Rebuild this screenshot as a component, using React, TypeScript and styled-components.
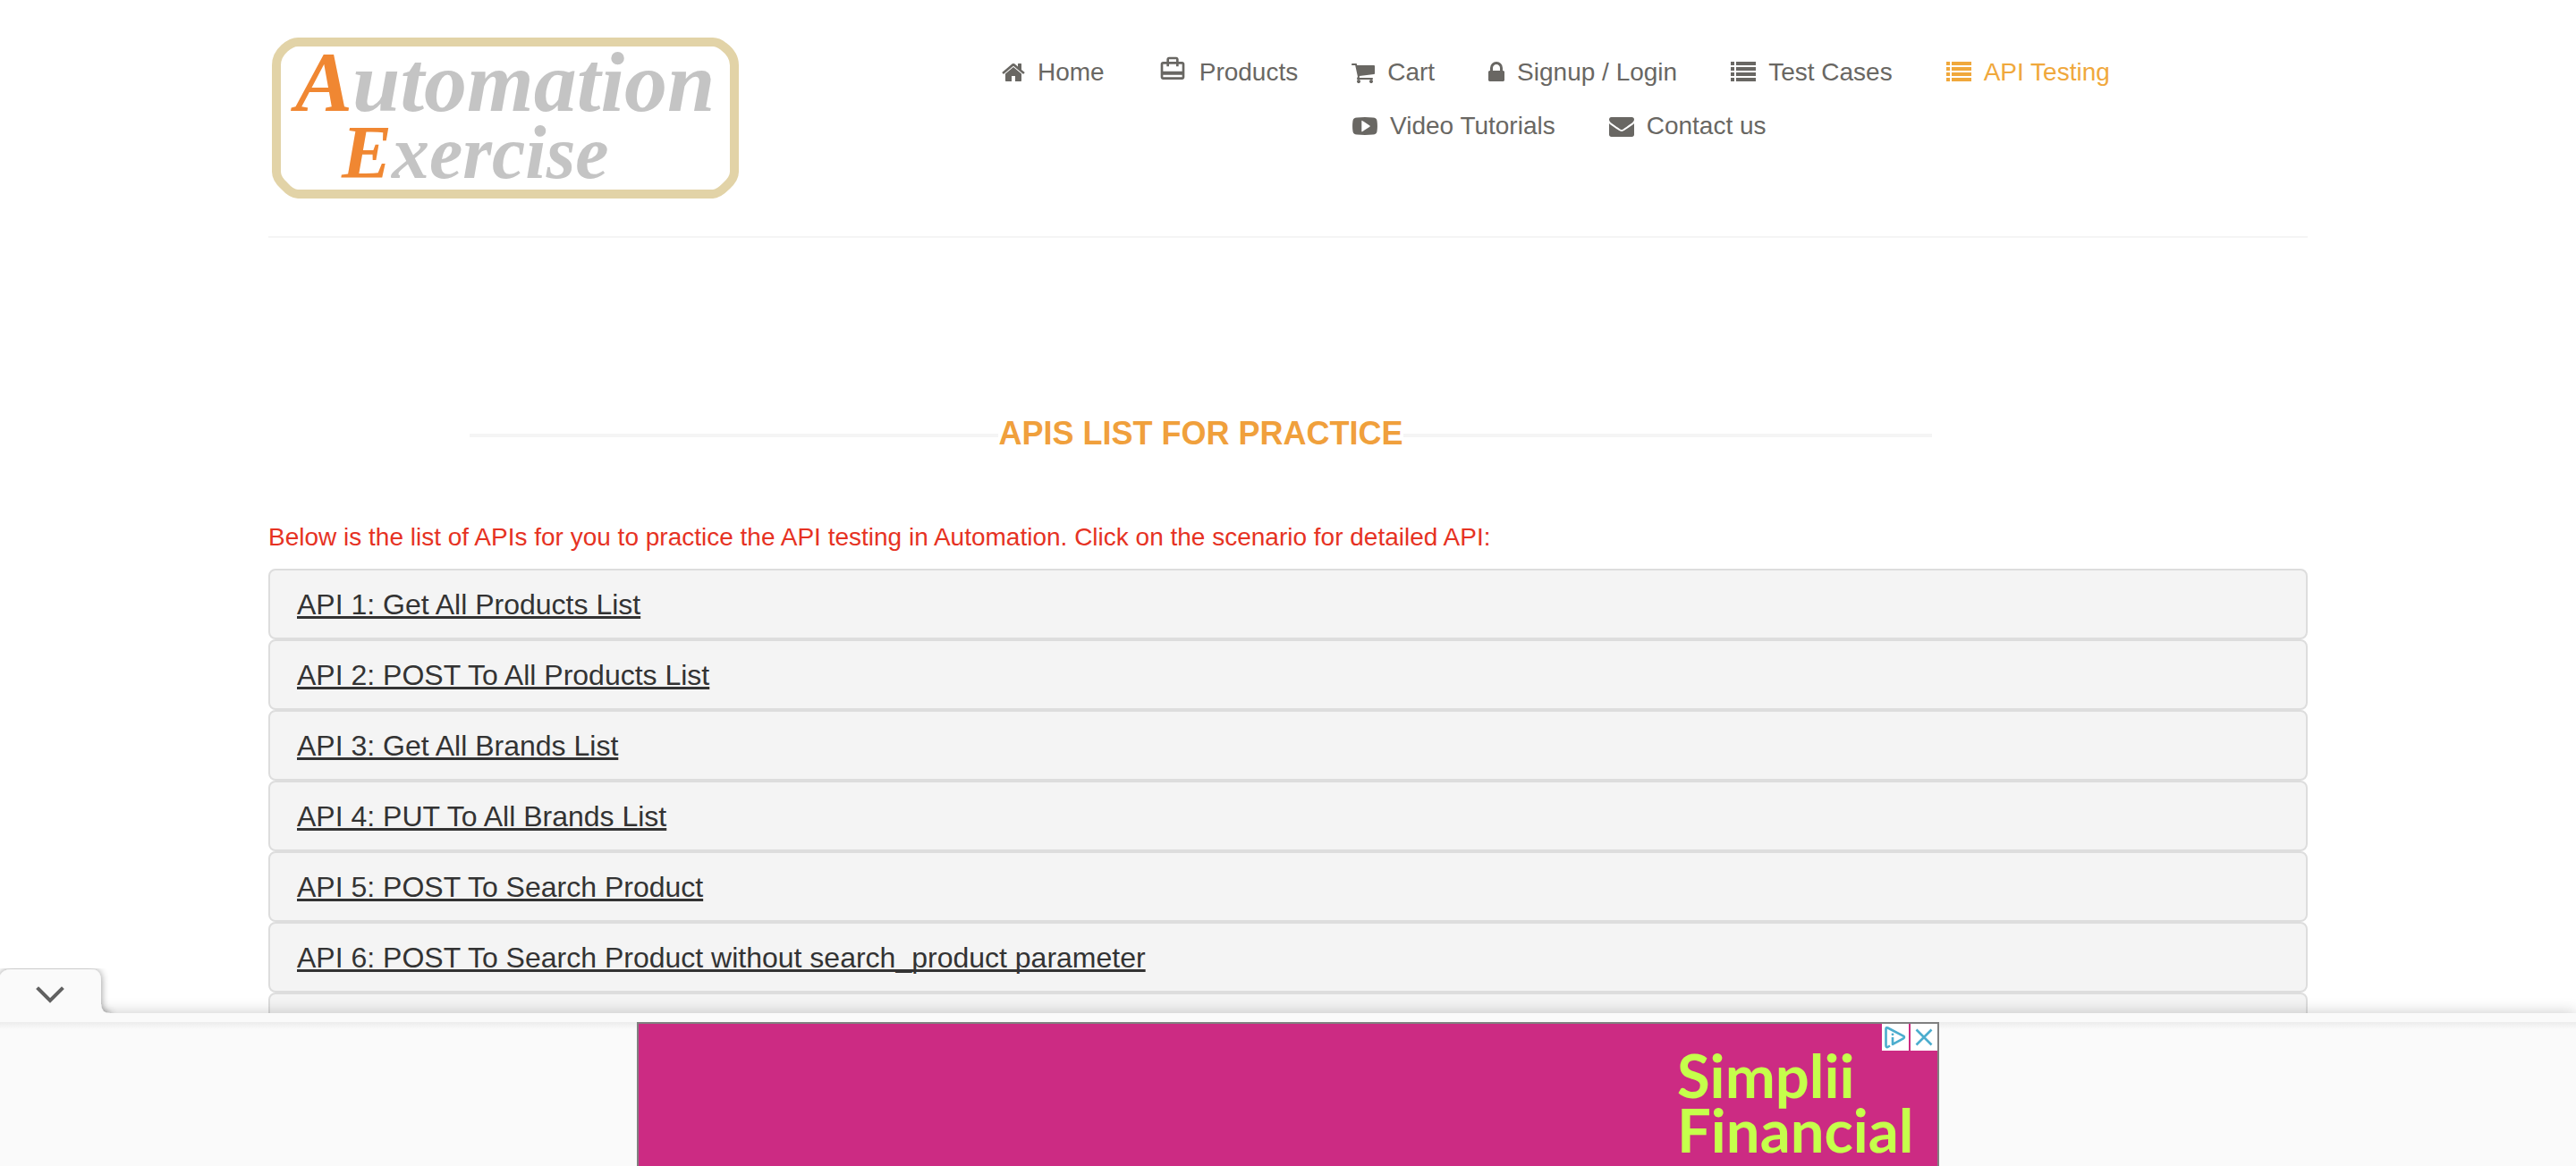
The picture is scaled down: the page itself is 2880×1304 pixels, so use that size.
import React from "react";
import styled, { createGlobalStyle } from "styled-components";

const GlobalStyle = createGlobalStyle`
  * { box-sizing: border-box; }
  body {
    margin: 0;
    background: #fff;
    font-family: "Liberation Sans", Arial, Helvetica, sans-serif;
    font-size: 28px;
    color: #696763;
  }
`;

const Page = styled.div`
  display: flex;
  flex-direction: column;
  height: 100vh;
  overflow: hidden;
`;

const Content = styled.div`
  flex: 1;
  min-height: 0;
  overflow: hidden;
`;

const Container = styled.div`
  max-width: 2280px;
  margin: 0 auto;
`;

const Header = styled.header`
  display: grid;
  grid-template-columns: 1fr 2fr;
  padding-bottom: 42px;
  border-bottom: 2px solid #f5f5f5;
`;

const LogoLink = styled.a`
  display: block;
  padding: 42px 0 0 4px;
`;

const LogoArt = styled.svg`
  display: block;
`;

const Nav = styled.nav`
  padding: 51px 0 0 60px;
`;

const NavRow = styled.ul<{ $indent?: boolean }>`
  display: flex;
  gap: 60px;
  margin: 0;
  padding: 0 0 0 ${(p) => (p.$indent ? "392px" : "0")};
  list-style: none;
`;

const NavLink = styled.a<{ $active?: boolean }>`
  display: flex;
  align-items: center;
  gap: 14px;
  height: 60px;
  color: ${(p) => (p.$active ? "#f0a83c" : "#696763")};
  text-decoration: none;
  white-space: nowrap;
`;

const Glyph = styled.svg<{ $raised?: boolean }>`
  display: block;
  flex: none;
  fill: currentColor;
  margin-bottom: ${(p) => (p.$raised ? "8px" : "0")};
`;

const TitleBar = styled.div`
  display: flex;
  align-items: center;
  margin: 195px 420px 0 225px;
`;

const Rule = styled.span`
  flex: 1;
  height: 4px;
  margin-top: 4px;
  background: #f5f5f5;
`;

const Title = styled.h2`
  margin: 0;
  font-size: 36px;
  line-height: 48px;
  font-weight: 700;
  color: #f0a03c;
`;

const Intro = styled.p`
  margin: 72px 0 0;
  line-height: 40px;
  padding-bottom: 15px;
  color: #e63223;
`;

const Panel = styled.div`
  min-height: 79px;
  padding: 21px 30px 19px;
  border: 2px solid #ddd;
  border-radius: 8px;
  background: #f4f4f4;
`;

const PanelTitle = styled.h4`
  margin: 0;
  font-size: 32px;
  line-height: 35px;
  font-weight: 400;
`;

const PanelLink = styled.a`
  color: #333;
  text-decoration: underline;
  text-decoration-thickness: 3px;
  text-underline-offset: 2px;
  text-decoration-skip-ink: none;
`;

const AdDock = styled.aside`
  position: relative;
  flex: none;
  padding-top: 10px;
  background: #fafafa;
  box-shadow: 0 0 16px rgba(0, 0, 0, 0.22);
`;

const AdStage = styled.div`
  display: flex;
  justify-content: center;
  height: 161px;
  overflow: hidden;
  background: linear-gradient(#ececec, #fafafa 8px);
`;

const CollapseButton = styled.button`
  position: absolute;
  left: 0;
  bottom: 100%;
  display: block;
  padding: 0;
  border: 0;
  background: none;
  overflow: hidden;
`;

const TabArt = styled.svg`
  display: block;
`;

const Banner = styled.div`
  position: relative;
  width: 1456px;
  height: 180px;
  padding: 27px 25px 0 0;
  border: 2px solid #808080;
  background: #cc2b83;
`;

const BannerText = styled.a`
  display: block;
  width: 266px;
  margin-left: auto;
  font-family: Lato, "Liberation Sans", sans-serif;
  font-size: 67px;
  line-height: 61px;
  font-weight: 700;
  color: #c5ff4b;
  text-decoration: none;
  white-space: nowrap;
`;

const BannerControls = styled.div`
  position: absolute;
  top: 0;
  right: 0;
  display: flex;
  gap: 2px;
`;

const BannerButton = styled.button`
  width: 30px;
  height: 30px;
  padding: 0;
  border: 0;
  background: #fff;
`;

const icons = {
  home: (
    <Glyph width="26" height="28" viewBox="64 0 1664 1792" aria-hidden>
      <path d="M1472 992v480q0 26-19 45t-45 19h-384v-384h-256v384h-384q-26 0-45-19t-19-45v-480q0-1 .5-3t.5-3l575-474 575 474q1 2 1 6zm223-69l-62 74q-8 9-21 11h-3q-13 0-21-7l-692-577-692 577q-12 8-24 7-13-2-21-11l-62-74q-8-10-7-23.5t11-21.5l719-599q32-26 76-26t76 26l244 204v-195q0-14 9-23t23-9h192q14 0 23 9t9 23v408l219 182q10 8 11 21.5t-7 23.5z" />
    </Glyph>
  ),
  bag: (
    <Glyph $raised width="32" height="32" viewBox="0 0 24 24" aria-hidden>
      <path d="M20 6h-3V4c0-1.11-.89-2-2-2H9c-1.11 0-2 .89-2 2v2H4c-1.11 0-2 .89-2 2v11c0 1.11.89 2 2 2h16c1.11 0 2-.89 2-2V8c0-1.11-.89-2-2-2zM9 4h6v2H9V4zm11 15H4v-2h16v2zm0-5H4V8h3v2h2V8h6v2h2V8h3v6z" />
    </Glyph>
  ),
  cart: (
    <Glyph width="26" height="28" viewBox="64 0 1664 1792" aria-hidden>
      <path d="M704 1536q0 52-38 90t-90 38-90-38-38-90 38-90 90-38 90 38 38 90zm896 0q0 52-38 90t-90 38-90-38-38-90 38-90 90-38 90 38 38 90zm128-1088v512q0 24-16.500 42.500t-40.500 21.500l-1044 122q13 60 13 70 0 16-24 64h920q26 0 45 19t19 45-19 45-45 19h-1024q-26 0-45-19t-19-45q0-11 8-31.500t16-36 21.500-40 15.500-29.500l-177-823h-204q-26 0-45-19t-19-45 19-45 45-19h256q16 0 28.500 6.500t19.500 15.500 13 24.500 8 26 5.500 29.500 4.500 26h1201q26 0 45 19t19 45z" />
    </Glyph>
  ),
  lock: (
    <Glyph width="18" height="28" viewBox="320 0 1152 1792" aria-hidden>
      <path d="M640 768h512v-192q0-106-75-181t-181-75-181 75-75 181v192zm832 96v576q0 40-28 68t-68 28h-960q-40 0-68-28t-28-68v-576q0-40 28-68t68-28h32v-192q0-184 132-316t316-132 316 132 132 316v192h32q40 0 68 28t28 68z" />
    </Glyph>
  ),
  list: (
    <Glyph width="28" height="28" viewBox="0 0 28 28" aria-hidden>
      <path d="M0 2h4v4H0zM6 2h22v4H6zM0 8h4v4H0zM6 8h22v4H6zM0 14h4v4H0zM6 14h22v4H6zM0 20h4v4H0zM6 20h22v4H6z" />
    </Glyph>
  ),
  video: (
    <Glyph width="28" height="28" viewBox="0 0 28 28" aria-hidden>
      <path
        fillRule="evenodd"
        d="M5 4.400Q14 3.600 23 4.400Q27 4.600 27.500 8Q28.400 14 27.500 20Q27 23.400 23 23.600Q14 24.400 5 23.600Q1 23.400 .5 20Q-.4 14 .5 8Q1 4.600 5 4.400ZM10.300 8.200V19.800Q10.300 20.600 11 20.200L19.400 14.700Q20.200 14 19.400 13.400L11 7.900Q10.300 7.500 10.300 8.200Z"
      />
    </Glyph>
  ),
  mail: (
    <Glyph width="28" height="28" viewBox="0 0 1792 1792" aria-hidden>
      <path d="M1792 710v794q0 66-47 113t-113 47h-1472q-66 0-113-47t-47-113v-794q44 49 101 87 362 246 497 345 57 42 92.500 65.500t94.500 48 110 24.500h2q51 0 110-24.500t94.500-48 92.500-65.500q170-123 498-345 57-39 100-87zm0-294q0 79-49 151t-122 123q-376 261-468 325-10 7-42.500 31t-54 38.500-52 32.500-57.500 27-50 9h-2q-23 0-50-9t-57.500-27-52-32.500-54-38.500-42.500-31q-91-64-262-182.500t-205-142.500q-62-42-117-115.500t-55-136.500q0-78 41.500-130t118.500-52h1472q65 0 112.500 47t47.500 113z" />
    </Glyph>
  ),
};

type NavEntry = { label: string; icon: keyof typeof icons; active?: boolean };

const primaryNav: NavEntry[] = [
  { label: "Home", icon: "home" },
  { label: "Products", icon: "bag" },
  { label: "Cart", icon: "cart" },
  { label: "Signup / Login", icon: "lock" },
  { label: "Test Cases", icon: "list" },
  { label: "API Testing", icon: "list", active: true },
];

const secondaryNav: NavEntry[] = [
  { label: "Video Tutorials", icon: "video" },
  { label: "Contact us", icon: "mail" },
];

const apis = [
  "API 1: Get All Products List",
  "API 2: POST To All Products List",
  "API 3: Get All Brands List",
  "API 4: PUT To All Brands List",
  "API 5: POST To Search Product",
  "API 6: POST To Search Product without search_product parameter",
];

function NavItems({ items, indent }: { items: NavEntry[]; indent?: boolean }) {
  return (
    <NavRow $indent={indent}>
      {items.map((item) => (
        <li key={item.label}>
          <NavLink href="#" $active={item.active}>
            {icons[item.icon]}
            {item.label}
          </NavLink>
        </li>
      ))}
    </NavRow>
  );
}

function Logo() {
  return (
    <LogoArt width="522" height="180" viewBox="0 0 522 180" role="img" aria-label="Automation Exercise">
      <path
        d="M29 5H493Q499 5 505 10Q517 19 517 31V150Q517 158 508 166Q499 175 493 175H29Q22 175 14 166Q5 158 5 150V31Q5 20 14 12Q22 5 29 5Z"
        fill="#fff"
        stroke="#e2d3a7"
        strokeWidth="10"
      />
      <g fontFamily="'Liberation Serif', 'Times New Roman', serif" fontStyle="italic" fontWeight="700" fill="#c4c4c4">
        <text x="26" y="82" fontSize="96">
          <tspan fill="#f08732">A</tspan>utomation
        </text>
        <text x="78" y="157" fontSize="84">
          <tspan fill="#f08732">E</tspan>xercise
        </text>
      </g>
    </LogoArt>
  );
}

export default function App() {
  return (
    <Page>
      <GlobalStyle />
      <Content>
        <Container>
          <Header>
            <LogoLink href="#">
              <Logo />
            </LogoLink>
            <Nav>
              <NavItems items={primaryNav} />
              <NavItems items={secondaryNav} indent />
            </Nav>
          </Header>
          <main>
            <TitleBar>
              <Rule />
              <Title>APIS LIST FOR PRACTICE</Title>
              <Rule />
            </TitleBar>
            <Intro>
              Below is the list of APIs for you to practice the API testing in Automation. Click on the scenario for
              detailed API:
            </Intro>
            {apis.map((name) => (
              <Panel key={name}>
                <PanelTitle>
                  <PanelLink href="#">{name}</PanelLink>
                </PanelTitle>
              </Panel>
            ))}
            <Panel aria-hidden />
          </main>
        </Container>
      </Content>
      <AdDock>
        <CollapseButton aria-label="Collapse ad">
          <TabArt width="136" height="50" viewBox="0 0 136 50">
            <defs>
              <filter id="tabShadow" x="-20%" y="-20%" width="140%" height="140%">
                <feDropShadow dx="0" dy="0" stdDeviation="4" floodColor="#000" floodOpacity="0.45" />
              </filter>
            </defs>
            <path
              d="M0 8Q4 1 12 1H101Q113 1 113 14V40Q113 50 123 50V70H0Z"
              fill="#fafafa"
              filter="url(#tabShadow)"
            />
            <path d="M43 23L56 36L69 23" fill="none" stroke="#616161" strokeWidth="4" strokeLinecap="square" />
          </TabArt>
        </CollapseButton>
        <AdStage>
          <Banner>
            <BannerText href="#">
              Simplii
              <br />
              Financial
            </BannerText>
            <BannerControls>
              <BannerButton aria-label="Ad choices">
                <svg width="30" height="30" viewBox="0 0 30 30" fill="none" stroke="#4badce">
                  <path
                    d="M9 24.500L6.500 26Q4.500 26.500 4.500 24V6Q4.500 3.500 6.500 4.500L24 13.700Q26 15 24 16.300L12 22.800V15"
                    strokeWidth="2.600"
                    strokeLinejoin="round"
                  />
                  <circle cx="12" cy="11.800" r="1.400" fill="#4badce" stroke="none" />
                </svg>
              </BannerButton>
              <BannerButton aria-label="Close ad">
                <svg width="30" height="30" viewBox="0 0 30 30" stroke="#4badce" strokeWidth="2.600">
                  <path d="M6.500 6.500L23.500 23.500M23.500 6.500L6.500 23.500" />
                </svg>
              </BannerButton>
            </BannerControls>
          </Banner>
        </AdStage>
      </AdDock>
    </Page>
  );
}
